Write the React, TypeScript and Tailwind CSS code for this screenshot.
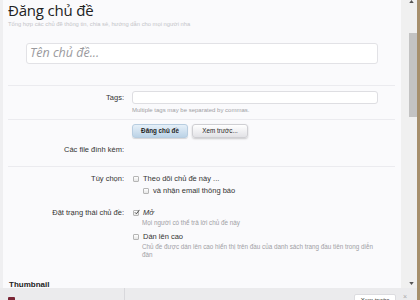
import React from "react";

const Box = ({ checked = false }: { checked?: boolean }) => (
  <span className="relative inline-block w-[6px] h-[6px] shrink-0 border border-[#b5b5b5] bg-gradient-to-b from-white to-[#e6e6e6] rounded-[1px]">
    {checked && (
      <svg viewBox="0 0 10 10" className="absolute left-[0px] top-[-2px] w-[6px] h-[6px]">
        <path d="M1.5 5.5 L4 8 L9 1.5" fill="none" stroke="#444" strokeWidth="1.6" />
      </svg>
    )}
  </span>
);

export default function App() {
  return (
    <div className="w-[420px] h-[300px] overflow-hidden flex bg-[#efeff1] font-['Liberation_Sans',sans-serif] text-[#333]">
      <div className="flex-1 flex flex-col min-w-0">
        <div className="flex h-[288px]">
          <main className="flex-1 min-w-0 ml-[3px] bg-[#fafafc] overflow-hidden pl-[5px] pr-[6px]">
            <h1 className="font-['Open_Sans',sans-serif] text-[15px] leading-[18px] mt-[1px] tracking-[-0.2px] text-[#222]">
              Đăng chủ đề
            </h1>
            <p className="text-[5.8px] leading-[8px] text-[#c4c4c8] mt-[1px] whitespace-nowrap">
              Tổng hợp các chủ đề thông tin, chia sẻ, hướng dẫn cho mọi người nha
            </p>
            <div className="ml-[18px] mt-[15px] w-[352px] h-[21px] bg-white border border-[#e2e2e6] rounded-[3px] flex items-center pl-[3px]">
              <span className="font-['Open_Sans',sans-serif] italic text-[12.5px] text-[#9a9a9e]">Tên chủ đề...</span>
            </div>
            <div className="mt-[21px] h-px bg-[#ebebef]" />

            {/* Tags */}
            <div className="flex mt-[5px]">
              <div className="w-[116px] text-right text-[7.5px] leading-[13px] pr-0">Tags:</div>
              <div className="ml-[8px] flex-1">
                <div className="w-[246px] h-[13px] bg-white border border-[#dedee2] rounded-[3px]" />
                <div className="text-[6px] leading-[10px] mt-[1px] text-[#a0a0a4]">
                  Multiple tags may be separated by commas.
                </div>
              </div>
            </div>
            <div className="mt-[4px] h-px bg-[#ebebef]" />

            {/* Buttons */}
            <div className="flex mt-[4px] ml-[124px] gap-[4px]">
              <button className="w-[56px] h-[14px] rounded-[3px] border border-[#b8cde0] bg-gradient-to-b from-[#e6f0f9] to-[#bcd3e7] text-[6.3px] text-[#222] font-bold shadow-[0_1px_1px_rgba(0,0,0,0.15)]">
                Đăng chủ đề
              </button>
              <button className="w-[56px] h-[14px] rounded-[3px] border border-[#cfcfd3] bg-gradient-to-b from-white to-[#e2e2e6] text-[6.3px] text-[#222] shadow-[0_1px_2px_rgba(0,0,0,0.2)]">
                Xem trước...
              </button>
            </div>

            <div className="flex mt-[6px]">
              <div className="w-[116px] text-right text-[7.5px] leading-[12px]">Các file đính kèm:</div>
            </div>
            <div className="mt-[10px] h-px bg-[#ebebef]" />

            {/* Tùy chọn */}
            <div className="flex mt-[6px]">
              <div className="w-[116px] text-right text-[7.5px] leading-[12px]">Tùy chọn:</div>
              <div className="ml-[9px] flex-1 text-[7.5px]">
                <div className="flex items-center gap-[4px] h-[12px]">
                  <Box />
                  <span>Theo dõi chủ đề này ...</span>
                </div>
                <div className="flex items-center gap-[4px] h-[12px] ml-[10px]">
                  <Box />
                  <span>và nhận email thông báo</span>
                </div>
              </div>
            </div>

            {/* Trạng thái */}
            <div className="flex mt-[10px]">
              <div className="w-[116px] text-right text-[7.5px] leading-[12px]">Đặt trạng thái chủ đề:</div>
              <div className="ml-[9px] flex-1 text-[7.5px]">
                <div className="flex items-center gap-[4px] h-[12px]">
                  <Box checked />
                  <span className="italic">Mở</span>
                </div>
                <div className="ml-[9px] text-[6.3px] leading-[8px] text-[#a0a0a4]">Mọi người có thể trả lời chủ đề này</div>
                <div className="flex items-center gap-[4px] h-[12px] mt-[4px]">
                  <Box />
                  <span>Dán lên cao</span>
                </div>
                <div className="ml-[9px] w-[236px] text-[6.3px] leading-[8px] text-[#a0a0a4]">
                  Chủ đề được dán lên cao hiển thị trên đầu của danh sách trang đầu tiên trong diễn đàn
                </div>
              </div>
            </div>

            <div className="mt-[21px] ml-[1px] text-[8px] leading-[10px] font-bold text-[#222]">Thumbnail</div>
          </main>
          {/* scrollbar */}
          <div className="w-[16px] bg-[#f0f0f0] flex flex-col items-end relative">
            <svg viewBox="0 0 6 4" className="absolute right-[3px] top-[0px] w-[5px] h-[3px]">
              <path d="M0 4 L3 0 L6 4 Z" fill="#555" />
            </svg>
            <div className="mt-[33px] w-[8px] h-[84px] bg-[#c3c3c3]" />
            <svg viewBox="0 0 6 4" className="absolute right-[3px] top-[282px] w-[5px] h-[3px]">
              <path d="M0 0 L6 0 L3 4 Z" fill="#555" />
            </svg>
          </div>
        </div>
        {/* footer */}
        <div className="h-[12px] bg-[#ebebed] flex relative">
          <div className="w-[125px] border-r border-[#d8d8dc] relative">
            <div className="absolute left-[8px] top-[9px] w-[7px] h-[4px] bg-[#7a2636] rounded-t-[1px]" />
          </div>
          <div className="absolute left-[354px] top-[6px] w-[42px] h-[12px] bg-white border border-[#dcdce0] rounded-[2px] text-[6px] leading-[10px] text-center text-[#333]">
            Xem trước
          </div>
          <div className="absolute left-[403px] top-[5px] text-[7px] leading-[8px] text-[#aaa]">×</div>
        </div>
      </div>
      <div className="w-[3px] bg-[#a68f6c]" />
    </div>
  );
}
